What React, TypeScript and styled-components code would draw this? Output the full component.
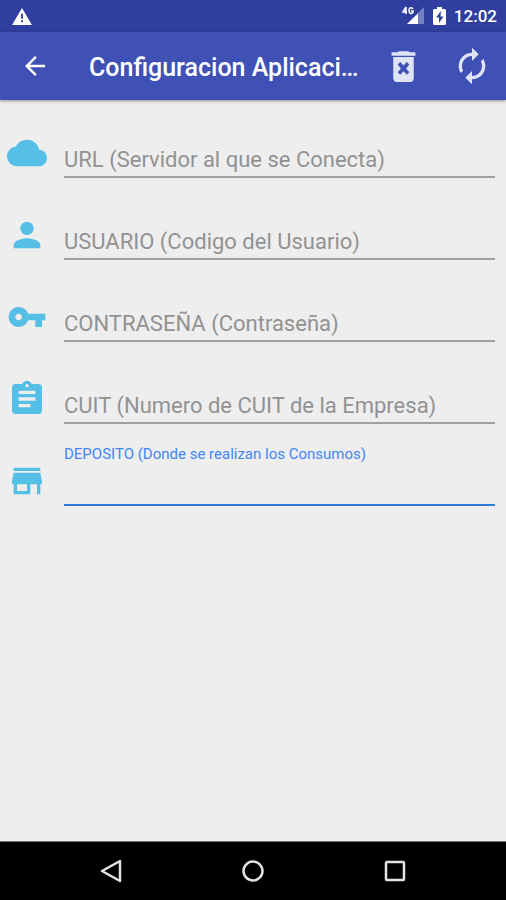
import React from "react";
import styled, { createGlobalStyle } from "styled-components";

const GlobalStyle = createGlobalStyle`
  * { box-sizing: border-box; }
  body { margin: 0; background: #eeeeee; font-family: Roboto, "Noto Sans", sans-serif; }
`;

const Screen = styled.div`
  display: flex;
  flex-direction: column;
  min-height: 100vh;
`;

const StatusBar = styled.div`
  display: flex;
  align-items: center;
  justify-content: space-between;
  height: 32px;
  padding: 0 9px 0 12px;
  background: #303f9f;
  color: #ffffff;
`;

const StatusGroup = styled.div`
  display: flex;
  align-items: center;
  gap: 8px;
`;

const Clock = styled.time`
  font-size: 17px;
  font-weight: 500;
  line-height: 32px;
`;

const AppBar = styled.header`
  display: flex;
  align-items: center;
  height: 68px;
  padding-left: 12px;
  background: #3f51b5;
  color: #ffffff;
  box-shadow: 0 1px 3px rgba(0, 0, 0, 0.4);
`;

const IconButton = styled.button<{ $width: number }>`
  display: flex;
  flex: none;
  align-items: center;
  justify-content: center;
  width: ${(p) => p.$width}px;
  height: 68px;
  padding: 0;
  border: 0;
  background: none;
  color: inherit;
  cursor: pointer;
`;

const Title = styled.h1`
  flex: 1;
  min-width: 0;
  margin: 0 4px 0 31px;
  padding-top: 3px;
  overflow: hidden;
  font-size: 25px;
  font-weight: 500;
  line-height: 36px;
  text-overflow: ellipsis;
  white-space: nowrap;
`;

const Actions = styled.div`
  display: flex;
  flex: none;
  color: #dfe3f6;
`;

const Form = styled.form`
  flex: 1;
  padding: 11px 11px 0 7px;
`;

const Row = styled.div`
  display: flex;
  align-items: flex-end;
  gap: 17px;
  height: 82px;
  padding-bottom: 15px;
`;

const RowIcon = styled.span`
  display: flex;
  flex: none;
  padding-bottom: 5px;
  color: #56bfe6;
`;

const Field = styled.div`
  flex: 1;
  min-width: 0;
`;

const FloatingLabel = styled.label`
  display: block;
  color: #4285f4;
  font-size: 15px;
  line-height: 20px;
`;

const Input = styled.input<{ $active: boolean }>`
  display: block;
  width: 100%;
  height: ${(p) => (p.$active ? 42 : 36)}px;
  padding: 0;
  border: 0;
  border-bottom: 2px solid ${(p) => (p.$active ? "#2f7cdf" : "#a0a0a0")};
  border-radius: 0;
  outline: 0;
  background: none;
  color: #212121;
  font-family: inherit;
  font-size: 22px;
  line-height: 32px;

  &::placeholder {
    color: #929292;
    opacity: 1;
  }
`;

const NavBar = styled.nav`
  display: flex;
  justify-content: center;
  height: 59px;
  border-top: 1px solid #777777;
  background: #000000;
  color: #e4e4e4;
`;

const NavButton = styled(IconButton)`
  height: 58px;
`;

function Glyph({ d, size }: { d: string; size: number }) {
  return (
    <svg width={size} height={size} viewBox="0 0 24 24" fill="currentColor" aria-hidden="true">
      <path d={d} />
    </svg>
  );
}

const icons = {
  back: "M20 11H7.83l5.59-5.59L12 4l-8 8 8 8 1.41-1.41L7.83 13H20v-2z",
  trash:
    "M6 19c0 1.1.9 2 2 2h8c1.1 0 2-.9 2-2V6.400H6V19zm2.6-8.1 1.5-1.5 1.9 2 1.9-2 1.500 1.500-1.900 2.200 1.900 2.200-1.500 1.500-1.900-2-1.900 2-1.500-1.500 1.900-2.200zM15.5 3.700l-.7-.7H9.200l-.7.7H5.500q-.5 0-.5.5v1.500h14V4.200q0-.5-.5-.5z",
  sync: "M12 6v3l4-4-4-4v3c-4.42 0-8 3.58-8 8 0 1.57.46 3.03 1.24 4.26L6.7 14.8c-.45-.83-.7-1.79-.7-2.8 0-3.31 2.69-6 6-6zm6.76 1.74L17.3 9.2c.44.84.7 1.79.7 2.8 0 3.31-2.69 6-6 6v-3l-4 4 4 4v-3c4.42 0 8-3.58 8-8 0-1.57-.46-3.03-1.24-4.26z",
  cloud:
    "M19.35 10.04C18.67 6.59 15.64 4 12 4 9.11 4 6.6 5.64 5.35 8.04 2.34 8.36 0 10.91 0 14c0 3.31 2.69 6 6 6h13c2.76 0 5-2.24 5-5 0-2.64-2.05-4.78-4.65-4.96z",
  person:
    "M12 12c2.21 0 4-1.79 4-4s-1.79-4-4-4-4 1.79-4 4 1.79 4 4 4zm0 2c-2.67 0-8 1.34-8 4v2h16v-2c0-2.66-5.33-4-8-4z",
  key: "M12.65 10C11.83 7.67 9.61 6 7 6c-3.31 0-6 2.69-6 6s2.69 6 6 6c2.61 0 4.83-1.67 5.65-4H17v4h4v-4h2v-4H12.65zM7 14c-1.1 0-2-.9-2-2s.9-2 2-2 2 .9 2 2-.9 2-2 2z",
  clipboard:
    "M19 3h-4.18C14.4 1.84 13.3 1 12 1c-1.3 0-2.4.84-2.82 2H5c-1.1 0-2 .9-2 2v14c0 1.1.9 2 2 2h14c1.1 0 2-.9 2-2V5c0-1.1-.9-2-2-2zm-7 0c.55 0 1 .45 1 1s-.45 1-1 1-1-.45-1-1 .45-1 1-1zm2 14H7v-2h7v2zm3-4H7v-2h10v2zm0-4H7V7h10v2z",
  store: "M20 4H4v2h16V4zm1 10v-2l-1-5H4l-1 5v2h1v6h10v-6h4v6h2v-6h1zm-9 4H6v-4h6v4z",
};

const fields = [
  { id: "url", label: "URL (Servidor al que se Conecta)", icon: icons.cloud },
  { id: "usuario", label: "USUARIO (Codigo del Usuario)", icon: icons.person },
  { id: "contrasena", label: "CONTRASEÑA (Contraseña)", icon: icons.key, type: "password" },
  { id: "cuit", label: "CUIT (Numero de CUIT de la Empresa)", icon: icons.clipboard },
  { id: "deposito", label: "DEPOSITO (Donde se realizan los Consumos)", icon: icons.store, active: true },
];

function SignalIcon() {
  return (
    <svg width="24" height="20" viewBox="0 0 24 20" aria-hidden="true">
      <path d="M23 1v17H6z" fill="#7580c0" />
      <path d="M17 7.500V18H6z" fill="#fff" />
      <path d="M5 1 2 6h4M5 1v7M12 3c-1-2-4-2-4 1.500s3 4 4 1.500V5h-2" fill="none" stroke="#fff" strokeWidth="1.500" />
    </svg>
  );
}

function BatteryIcon() {
  return (
    <svg width="13" height="20" viewBox="0 0 13 20" aria-hidden="true">
      <path
        fillRule="evenodd"
        fill="#fff"
        d="M4 1h5v2h2.500q1.500 0 1.500 1.500v13q0 1.500-1.500 1.500h-10Q0 19 0 17.500v-13Q0 3 1.500 3H4zM8 5l-5 6.500h3V17l4.500-6.500H7.500z"
      />
    </svg>
  );
}

export default function App() {
  return (
    <Screen>
      <GlobalStyle />
      <StatusBar>
        <svg width="20" height="17" viewBox="0 0 21 18" aria-hidden="true">
          <path fillRule="evenodd" fill="#fff" d="M10.500 0 21 18H0zM9.500 6v5.500h2V6zm0 7v2h2v-2z" />
        </svg>
        <StatusGroup>
          <SignalIcon />
          <BatteryIcon />
          <Clock>12:02</Clock>
        </StatusGroup>
      </StatusBar>
      <AppBar>
        <IconButton type="button" $width={46} aria-label="Volver">
          <Glyph d={icons.back} size={30} />
        </IconButton>
        <Title>Configuracion Aplicacion</Title>
        <Actions>
          <IconButton type="button" $width={70} aria-label="Borrar">
            <Glyph d={icons.trash} size={41} />
          </IconButton>
          <IconButton type="button" $width={68} aria-label="Sincronizar">
            <Glyph d={icons.sync} size={40} />
          </IconButton>
        </Actions>
      </AppBar>
      <Form>
        {fields.map(({ id, label, icon, type = "text", active = false }) => (
          <Row key={id}>
            <RowIcon>
              <Glyph d={icon} size={40} />
            </RowIcon>
            <Field>
              {active && <FloatingLabel htmlFor={id}>{label}</FloatingLabel>}
              <Input
                id={id}
                type={type}
                $active={active}
                placeholder={active ? undefined : label}
                aria-label={active ? undefined : label}
              />
            </Field>
          </Row>
        ))}
      </Form>
      <NavBar>
        <NavButton type="button" $width={142} aria-label="Atrás">
          <svg width="24" height="24" viewBox="0 0 24 24" fill="none" stroke="currentColor" strokeWidth="2.500">
            <path d="M21 2v20L3 12z" strokeLinejoin="round" />
          </svg>
        </NavButton>
        <NavButton type="button" $width={142} aria-label="Inicio">
          <svg width="24" height="24" viewBox="0 0 24 24" fill="none" stroke="currentColor" strokeWidth="2.500">
            <circle cx="12" cy="12" r="9.500" />
          </svg>
        </NavButton>
        <NavButton type="button" $width={142} aria-label="Recientes">
          <svg width="24" height="24" viewBox="0 0 24 24" fill="none" stroke="currentColor" strokeWidth="2.500">
            <rect x="3" y="3" width="18" height="18" rx="1" />
          </svg>
        </NavButton>
      </NavBar>
    </Screen>
  );
}
